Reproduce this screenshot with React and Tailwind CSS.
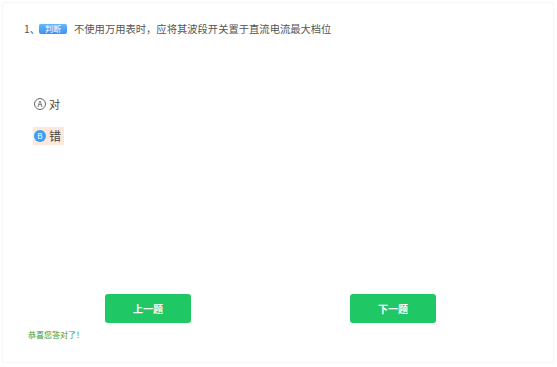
import React from 'react';

const font = { fontFamily: '"Noto Sans CJK SC", "Liberation Sans", sans-serif' };

const Option = ({ letter, text, selected }) => (
  <div
    className={`flex items-center gap-[3px] h-[18px] pl-[1px] pr-[3px] w-fit ${
      selected ? 'bg-[#fde7d8]' : ''
    }`}
  >
    <span
      className={`flex items-center justify-center w-[12px] h-[12px] rounded-full text-[8px] leading-none ${
        selected
          ? 'bg-[#3aa0f3] text-white'
          : 'border border-[#666] text-[#444]'
      }`}
    >
      {letter}
    </span>
    <span className={`text-[#444] ${selected ? 'text-[12px]' : 'text-[11px]'}`}>{text}</span>
  </div>
);

export default function App() {
  return (
    <div className="w-[557px] h-[367px] bg-white p-[2px]" style={font}>
      <div className="w-[552px] h-[361px] border border-[#f6f6f6] flex flex-col">
        <div className="flex items-center h-[20px] mt-[16px] pl-[21px] text-[10.3px] text-[#555]">
          <span className="w-[15px] overflow-hidden whitespace-nowrap">1、</span>
          <span className="mr-[7px] w-[28px] h-[10px] flex items-center justify-center rounded-[2px] bg-gradient-to-b from-[#62b8fb] to-[#3a94ee] text-white text-[8px] leading-none">
            判断
          </span>
          <span>不使用万用表时，应将其波段开关置于直流电流最大档位</span>
        </div>

        <div className="flex flex-col gap-[14px] pl-[30px] mt-[56px]">
          <Option letter="A" text="对" />
          <Option letter="B" text="错" selected />
        </div>

        <div className="flex mt-[149px] pl-[102px] gap-[159px]">
          <button className="w-[86px] h-[29px] rounded-[3px] bg-[#1fc865] text-white text-[10px] font-bold">
            上一题
          </button>
          <button className="w-[86px] h-[29px] rounded-[3px] bg-[#1fc865] text-white text-[10px] font-bold">
            下一题
          </button>
        </div>

        <div className="pl-[25px] mt-[6px] text-[8px] text-[#3a9a2a]">恭喜您答对了！</div>
      </div>
    </div>
  );
}
